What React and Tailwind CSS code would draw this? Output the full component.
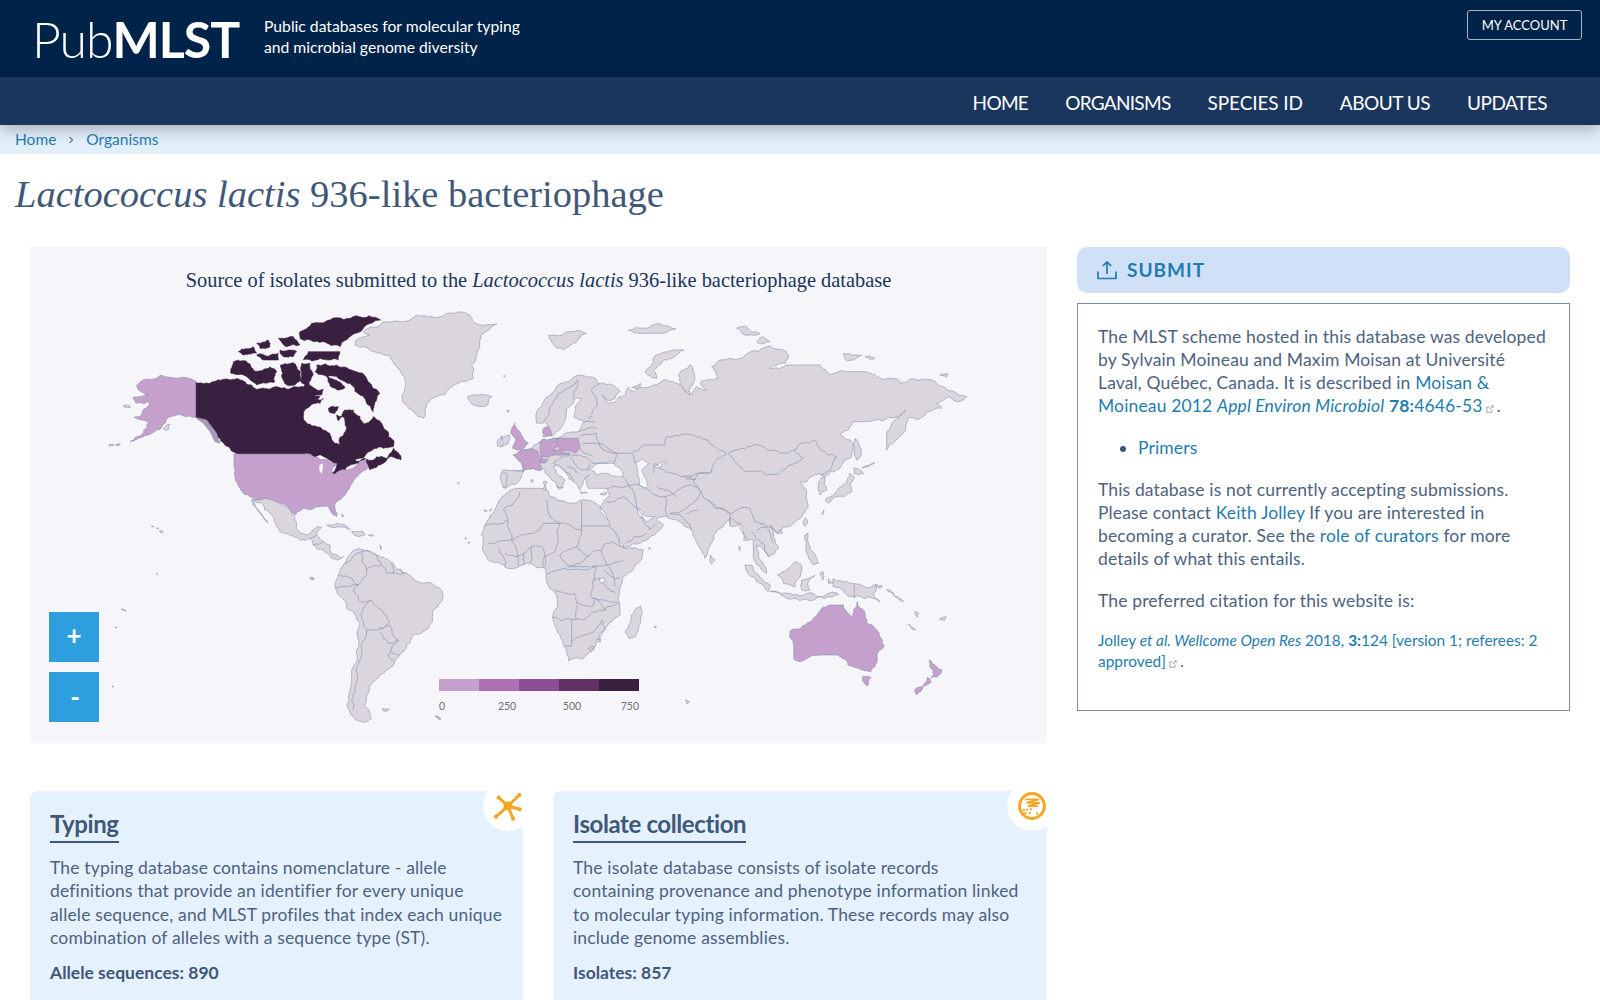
import React from "react";

const LIGHT = "#c6a0cc", DARK = "#3a2040", GREY = "#dbd5dd", LINE = "#7f8ea9", BG = "#f6f5f9";

const noise = (x, y) => {
  const s = Math.sin(x * 12.9898 + y * 78.233) * 43758.5453;
  return s - Math.floor(s) - 0.5;
};
/* Gives hand-traced outlines a natural, crinkled coastline; straight axis-aligned borders stay straight. */
function rough(str, closed) {
  let p = str.trim().split(/\s+/).map((s) => s.split(",").map(Number));
  for (let level = 0; level < 3; level++) {
    const out = [];
    const n = closed ? p.length : p.length - 1;
    for (let i = 0; i < n; i++) {
      const a = p[i], b = p[(i + 1) % p.length];
      out.push(a);
      const dx = b[0] - a[0], dy = b[1] - a[1];
      const len = Math.hypot(dx, dy);
      if (len < 7 || ((dx === 0 || dy === 0) && len > 30)) continue;
      const k = Math.max(-7, Math.min(7, noise(a[0] + b[0], a[1] + b[1]) * len * 0.32));
      out.push([(a[0] + b[0]) / 2 - (dy / len) * k, (a[1] + b[1]) / 2 + (dx / len) * k]);
    }
    if (!closed) out.push(p[p.length - 1]);
    p = out;
  }
  return p.map((q) => q[0].toFixed(1) + "," + q[1].toFixed(1)).join(" ");
}

function Land({ pts, fill = GREY, stroke = LINE }) {
  return <polygon points={rough(pts, true)} fill={fill} stroke={stroke} strokeWidth="0.55" vectorEffect="non-scaling-stroke" strokeLinejoin="round" />;
}
function Border({ pts }) {
  return <polyline points={rough(pts, false)} fill="none" stroke={LINE} strokeWidth="0.6" vectorEffect="non-scaling-stroke" strokeLinejoin="round" />;
}

const canadaParts = [
  "497,247 540,250 580,238 610,238 640,243 665,255 680,268 730,262 775,268 820,260 830,248 860,270 880,268 875,285 850,290 860,300 880,295 870,310 830,325 820,350 830,370 860,380 900,400 915,430 930,435 932,410 945,395 945,365 935,345 945,330 970,330 990,350 1000,370 1015,368 1030,350 1060,380 1075,410 1090,420 1090,440 1060,445 1010,460 975,480 1000,480 1040,470 1070,475 1090,445 1110,465 1112,480 1080,470 1060,490 1030,505 1020,510 1010,490 1005,475 985,490 945,510 915,522 905,520 920,490 890,478 870,478 850,468 820,462 620,462 600,445 575,425 555,395 530,360 497,352",
  "860,195 885,192 920,195 980,215 1020,250 1050,280 1040,300 1030,335 1010,310 1000,290 975,275 960,250 930,238 905,228 880,225 855,215",
  "810,95 845,70 900,60 980,47 1052,60 1000,85 960,110 930,140 880,125 840,120 810,115",
  "835,155 930,155 925,180 870,175 820,180",
  "610,185 640,182 670,210 720,200 740,215 735,245 680,255 650,230 602,220",
  "625,155 670,140 680,160 640,165",
  "680,130 715,120 720,140 690,145",
  "745,115 790,110 810,135 770,140",
  "680,165 745,160 745,180 700,180",
  "750,150 800,155 790,170 760,170",
  "752,195 790,188 812,215 808,245 770,255 755,225",
  "815,190 840,190 850,225 835,255 810,240",
  "895,325 925,320 915,340 900,338",
  "890,228 915,240 945,262 930,270 900,258",
  "845,285 870,290 862,300", "920,345 938,350 925,362",
];
const naSpecks = [
  "237,434 250,433 252,437 238,438", "258,433 270,431 270,435 258,436", "280,316 300,319 301,323 282,321",
  "400,385 420,373 416,388 404,391", "312,352 325,350 322,358", "365,677 372,680 366,681", "380,683 386,685 381,687", "390,690 400,695 396,700 390,697",
  "890,675 920,670 960,690 925,680", "965,695 1000,695 1005,705 975,706", "1015,705 1030,706 1024,709", "935,642 942,648 936,650",
  "1283,548 1288,550 1284,552", "1420,228 1426,227 1424,231",
  "1378,630 1386,627 1380,634", "1362,630 1372,632 1365,635", "1305,712 1309,716 1306,718", "1314,726 1320,728 1315,730", "1050,735 1056,745 1052,748", "845,832 852,834 850,840 842,837",
  "1430,332 1436,331 1434,337",
];

const eurasia = "107,345 125,320 160,275 180,250 215,237 275,230 295,250 345,260 360,275 345,295 320,300 305,285 320,308 340,308 375,285 385,262 400,275 420,262 465,255 490,240 520,245 548,255 555,275 575,285 590,260 610,270 620,270 600,250 640,240 655,235 635,200 675,180 735,165 775,155 800,140 850,150 865,165 855,190 810,205 860,195 900,195 960,195 990,225 1040,215 1090,215 1130,230 1190,235 1200,250 1260,240 1310,250 1370,280 1400,290 1375,305 1345,290 1310,310 1325,325 1270,350 1225,352 1220,370 1190,420 1160,450 1160,395 1180,365 1215,330 1150,362 1100,365 1060,365 1020,405 1050,420 1060,430 1055,470 1020,505 990,515 975,530 960,520 920,545 900,545 920,570 925,620 890,660 850,680 835,700 810,675 835,745 805,770 795,755 770,735 775,770 800,820 780,800 760,775 760,720 745,720 730,720 720,670 695,680 690,655 650,690 640,720 615,775 600,745 580,695 555,680 540,665 500,650 470,655 490,675 450,710 400,730 375,745 350,700 320,650 300,620 330,590 320,565 265,565 255,535 265,525 250,545 240,570 220,545 200,520 170,495 160,500 195,540 180,565 150,530 130,505 100,505 70,515 50,550 15,565 5,550 8,510 70,512 65,490 40,465 75,450 95,445 118,430 130,418 170,415 235,395 250,365 275,350 235,360 222,350 225,320 245,295 225,295 200,325 190,370 170,395 155,408 135,365 110,370";
const seas = [
  "270,505 300,490 335,485 345,495 370,530 340,528 290,525",
  "405,490 420,480 445,490 425,510 445,560 430,565 415,530",
  "410,620 430,645 465,650 445,665 420,650",
  "465,500 495,482 498,490 475,505",
  "560,535 575,530 575,538 562,540",
];
const euPurple = [
  "45,368 50,385 60,395 72,420 85,430 72,445 50,450 38,445 48,420 32,395",
  "40,465 75,450 95,445 125,470 130,485 120,490 125,510 100,505 70,515 65,490",
  "118,430 130,418 170,415 175,440 160,450 165,465 130,470 125,470 120,455",
  "130,385 145,380 155,408 130,410",
  "172,415 235,415 240,445 225,460 180,450 175,440",
  "160,450 180,448 210,460 185,465 165,463",
  "118,482 145,478 130,490",
];
const euGrey = [
  "5,410 28,405 25,430 5,440", "-6,420 5,408 6,440 -8,438",
  "145,105 200,95 260,100 230,125 190,150 155,125", "385,90 430,85 480,72 528,85 480,100 420,100",
  "710,85 740,80 780,100 750,105", "770,125 790,110 810,125 775,130",
  "1030,160 1085,165 1060,180 1035,178", "1095,170 1125,175 1110,178", "1320,225 1345,222 1340,232",
  "435,215 460,175 520,150 552,150 530,165 490,180 460,210 470,235 445,225",
  "535,225 570,195 585,240 570,285 555,270 540,255",
  "1065,415 1075,425 1080,470 1070,480 1062,450", "1060,505 1090,520 1075,525 1062,520", "975,600 1010,575 1040,550 1050,520 1062,530 1055,575 1010,590 985,610",
  "955,545 975,530 980,570 960,585", "915,655 922,660 915,680 910,670", "835,695 845,690 845,702",
  "915,705 925,700 925,730 955,790 940,795 920,760", "630,765 645,780 635,793 628,780",
  "832,825 890,785 905,795 885,860 850,850", "735,795 760,800 810,855 805,875 770,845", "810,875 880,885 960,890 880,895",
  "905,840 945,825 925,845 930,870 905,870", "1000,835 1055,850 1130,855 1120,880 1140,906 1090,895 1050,890 1000,860",
  "130,545 140,545 138,570 130,568", "92,540 100,540 96,548", "170,560 190,562 178,568", "240,575 262,578 245,582", "300,582 320,578 315,585",
  "395,262 422,250 415,265", "1085,505 1100,497 1125,487 1105,500", "960,820 970,815 968,840", "985,835 1000,850 985,850", "960,890 1010,878 1015,885 975,895",
  "715,740 722,742 718,752", "965,640 972,630 968,645", "445,745 452,743 450,748",
];
const euBorders = [
  "395,460 430,435 495,435 500,410 555,402 600,410 680,460",
  "685,460 710,450 760,435 840,460 885,450 910,475 850,510 800,525 745,515 710,490 685,462",
  "885,450 905,430 945,420 985,465 1010,470 990,510 960,525",
  "680,460 650,480 635,515 590,525 580,545 600,570 625,600 690,640 750,625 765,665 790,670",
  "395,460 405,490", "460,520 465,490 540,530 635,515",
  "385,555 425,560 495,590 500,615 505,650", "320,565 380,560 385,555", "375,535 385,555 410,620",
  "495,590 570,555 600,570 590,600 560,625 510,640 555,660 575,690", "625,600 650,625 690,640 690,680", "690,655 720,670",
  "240,410 290,400 300,440 350,460 395,460", "245,430 295,430 350,460 340,490 280,490 240,465",
  "275,345 290,320 275,270 300,250", "130,365 175,280 230,240", "220,295 235,240",
  "320,605 370,590 410,625 430,660 450,690", "375,730 440,700", "470,670 450,690",
  "720,670 745,720", "770,690 800,680 835,700", "755,695 795,735 805,770", "785,670 800,680 820,730",
  "8,520 20,520 18,560 8,562", "70,512 40,510", "240,465 215,465 185,470 160,490 190,510 220,545", "210,470 235,505 265,510 270,490", "200,500 235,520",
  "240,445 280,470", "545,530 590,540", "470,560 530,590", "595,630 560,640", "235,395 290,385", "250,365 285,368",
];
const africa = "25,575 50,565 135,565 150,590 205,610 245,600 300,620 320,655 350,705 375,745 430,750 410,790 370,830 360,880 359,915 359,945 300,1000 288,1035 250,1075 206,1083 194,1040 163,970 156,950 172,895 137,830 135,805 90,790 15,800 -35,780 -50,730 -48,680 -20,640 -5,610";
const africaBorders = [
  "245,605 245,678 330,678", "245,678 245,690 180,670 145,640 140,600", "60,575 55,590 10,630 25,660 35,720 100,700 130,670 180,670", "-48,680 25,660",
  "245,690 230,740 265,770 305,750 320,730 345,730 375,745", "180,670 170,740 135,770 130,800", "95,740 130,745 135,800", "305,750 320,795 370,780", "232,740 180,770 205,800 265,770",
  "35,720 -35,730", "35,720 50,770 95,740 90,790", "-5,745 15,800", "15,760 50,770", "70,760 72,795", "55,765 55,798",
  "205,800 270,800", "275,800 320,795 345,860",
];

function WorldMap() {
  return (
    <svg viewBox="30 247 1017 496" className="block w-full h-full" aria-label="World map">
      <g transform="translate(30,300) scale(0.33333)">
        {canadaParts.map((p, i) => <Land key={i} pts={p} fill={DARK} stroke={DARK} />)}
        <polygon points="840,478 870,465 895,478 870,483" fill={BG} />
        <Land fill={LIGHT} pts="497,242 440,235 390,226 350,238 318,256 328,272 358,285 325,290 308,295 318,310 355,305 358,315 340,328 335,345 315,352 330,360 355,370 350,385 320,410 300,425 340,410 380,390 405,370 420,350 440,345 470,350 497,352" />
        <polygon points="497,352 530,360 560,400 570,430 555,425 540,395 520,370" fill="#a99ab9" stroke={LINE} strokeWidth="0.5" vectorEffect="non-scaling-stroke" />
        <Land fill={LIGHT} pts="612,462 820,462 850,470 870,478 890,480 920,490 905,520 915,522 945,510 985,490 1008,475 1015,500 990,520 970,545 955,570 945,585 915,610 920,650 910,645 895,615 860,620 820,625 795,645 775,620 740,605 690,600 660,590 630,565 615,530 612,500" />
        <polygon points="868,495 880,490 876,522 868,512" fill={BG} />
        <Land pts="1000,95 1060,65 1140,60 1160,45 1250,40 1320,45 1330,65 1400,72 1365,95 1350,130 1340,165 1325,195 1330,235 1290,245 1260,265 1220,290 1190,310 1180,355 1165,350 1135,325 1115,290 1125,245 1100,200 1080,165 1030,155 975,135 980,120 1020,105" />
        <Land pts="1312,292 1340,285 1385,290 1375,310 1345,320 1320,305" />
        <Land pts="665,600 690,600 740,605 775,625 795,650 800,690 830,705 865,680 875,682 860,705 880,725 900,735 905,760 930,775 940,770 925,780 905,775 880,750 850,735 840,715 810,720 780,705 745,685 720,640 695,610" />
        <Land pts="665,600 690,640 715,668 700,650 680,625" />
        <Border pts="840,715 860,705" /><Border pts="850,735 880,725" />
        {naSpecks.map((p, i) => <Land key={i} pts={p} />)}
      </g>
      <g transform="translate(30,560) scale(0.33333)">
        <Land pts="945,10 985,-35 1040,-15 1090,10 1130,40 1180,70 1235,90 1240,105 1225,135 1210,150 1195,205 1150,225 1125,270 1105,290 1085,320 1050,345 1025,370 1015,400 1005,440 1025,475 1000,487 960,460 955,410 965,370 965,330 985,260 990,190 950,145 925,105 915,80 925,45" />
        <Border pts="1025,120 1055,150 1080,185 1045,210 1010,210 995,175 1000,145 1025,120" />
        <Border pts="1045,205 1080,195 1105,240 1075,250 1050,215" />
        <Border pts="1080,270 1110,285" /><Border pts="1105,240 1075,290 1095,305" />
        <Border pts="1010,210 990,300 975,390 970,450" />
        <Border pts="925,45 955,50 985,75 950,80 915,85" />
        <Border pts="945,10 995,-25 1010,30 1010,45 985,75 970,95 990,125 1025,120" />
        <Border pts="995,-25 1040,-15 1055,15 1010,30" />
        <Border pts="1055,15 1070,40 1100,40 1130,40" /><Border pts="1085,10 1090,40" /><Border pts="1110,25 1115,40" />
        <Land pts="1058,445 1078,446 1072,453 1058,452" />
        <Land pts="1216,468 1230,474 1230,478" />
        <Land pts="840,52 850,54 848,60 842,58" />
        <Land pts="273,147 285,150 288,154 276,150" /><Land pts="255,201 261,202 256,204" /><Land pts="246,378 251,379 247,382" /><Land pts="380,39 384,41 381,43" />
      </g>
      <g transform="translate(500,300) scale(0.33333)">
        <Land pts={africa} />
        {africaBorders.map((p, i) => <Border key={i} pts={p} />)}
        <Land pts="422,918 427,940 406,1010 387,1015 375,995 394,945" />
        <Land pts={eurasia} />
        {seas.map((p, i) => <Land key={i} pts={p} fill={BG} />)}
        {euBorders.map((p, i) => <Border key={i} pts={p} />)}
        {euGrey.map((p, i) => <Land key={i} pts={p} />)}
        {euPurple.map((p, i) => <Land key={i} pts={p} fill={LIGHT} />)}
      </g>
      <g transform="translate(400,560) scale(0.41667,0.33333)">
        <Border pts="352,40 385,30 395,25 470,20" />
        <Border pts="470,20 465,60 462,115 490,150" />
        <Border pts="365,172 415,178 425,180" />
        <Border pts="372,90 400,100 420,102 425,130 462,140 465,120" />
        <Border pts="425,135 422,175 445,178 465,155 495,150" />
        <Border pts="412,180 412,258 395,258" />
        <Border pts="412,245 440,225 470,208 485,180" />
        <Border pts="490,150 525,128" />
        <Border pts="485,180 495,205 478,245" />
        <Border pts="465,60 480,55 520,100" />
        <Border pts="462,115 490,120 520,125" />
        <Border pts="490,30 528,55" />
        <Border pts="452,265 462,258 465,265 456,272 452,265" />
        <Border pts="472,238 482,236 482,246 474,246 472,238" />
        <polygon points="478,58 490,52 492,64 482,70" fill={BG} stroke={LINE} strokeWidth="0.5" vectorEffect="non-scaling-stroke" />
        <polyline points="1090,75 1090,115" fill="none" stroke={LINE} strokeWidth="0.6" vectorEffect="non-scaling-stroke" />
        <Land fill={LIGHT} pts="935,215 985,185 1005,155 1030,135 1065,135 1085,175 1098,125 1120,190 1150,225 1162,255 1145,305 1130,335 1110,330 1075,315 1050,285 1010,285 960,305 945,295 945,260" />
        <Land fill={LIGHT} pts="1110,350 1130,352 1122,378 1115,370" />
        <Land fill={LIGHT} pts="1270,300 1300,330 1290,350 1275,355 1280,330" />
        <Land fill={LIGHT} pts="1265,352 1275,365 1240,405 1235,392" />
        <Land pts="1140,72 1158,78 1150,85" /><Land pts="1168,88 1208,125 1195,115" />
        <Land pts="1220,192 1238,210 1228,206" /><Land pts="1235,155 1245,160 1242,172" /><Land pts="1295,178 1310,168 1308,180" />
        <Land pts="685,420 695,425 688,432" /><Land pts="610,198 616,200 612,204" /><Land pts="85,468 97,475 97,480" />
      </g>
    </svg>
  );
}

function Ext() {
  return (
    <svg viewBox="0 0 10 10" className="inline-block w-[8px] h-[8px] mx-[3px] align-[-1px]" fill="none" stroke="#8a8f96" strokeWidth="1">
      <path d="M7.5 5.5V9H1V2.5H4.5" />
      <path d="M5 5L9 1M6.5 1H9V3.5" />
    </svg>
  );
}

function Card({ title, children, stat, icon, width }) {
  return (
    <div className={`relative h-[260px] bg-[#e6f1fe] rounded-tl-[8px] px-[20px] pt-[18px] ${width}`}>
      <div className="absolute top-[-10px] right-[-10px] w-[50px] h-[50px] rounded-full bg-white flex items-center justify-center">{icon}</div>
      <h2 className="inline-block text-[24px] leading-[30px] font-bold text-[#3f5878] border-b-[2px] border-[#3f5878] pb-[2px] tracking-[-0.4px]">{title}</h2>
      <p className="mt-[13px] text-[17.5px] leading-[23.3px] tracking-[0.16px] whitespace-nowrap text-[#4d627f]">{children}</p>
      <p className="mt-[12px] text-[17.5px] leading-[23px] font-bold text-[#3f5878]">{stat}</p>
    </div>
  );
}

export default function App() {
  const link = "text-[#1f7cae]";
  return (
    <div className="w-[1600px] h-[1000px] overflow-hidden bg-white font-['Lato',sans-serif] text-[#3f5878]">
      <header className="h-[77px] bg-[#002349] flex items-start text-white">
        <div className="ml-[32px] mt-[9px] w-[206px] shrink-0 whitespace-nowrap text-[50px] leading-[60px] tracking-[-1px]">
          <span className="font-light">Pub</span><span className="font-bold">MLST</span>
        </div>
        <div className="ml-[26px] mt-[16px] text-[15.7px] leading-[21px]">
          Public databases for molecular typing<br />and microbial genome diversity
        </div>
        <button className="ml-auto mr-[18px] mt-[10px] w-[115px] h-[30px] border border-[#a9b4c2] rounded-[3px] text-[13px] leading-none">MY ACCOUNT</button>
      </header>
      <nav className="relative z-10 h-[48px] bg-[#1a365d] shadow-[0_4px_14px_rgba(0,0,0,0.28)] flex items-center justify-end gap-[37px] pr-[53px] pt-[5px] text-white text-[19px] tracking-[-0.7px]">
        <span>HOME</span><span>ORGANISMS</span><span className="tracking-[-0.1px]">SPECIES ID</span><span className="tracking-[-0.5px]">ABOUT US</span><span className="tracking-[-0.5px]">UPDATES</span>
      </nav>
      <div className="h-[29px] bg-[#e3eefb] flex items-center pl-[15px] text-[15.5px] text-[#1f7cae]">
        <span>Home</span>
        <svg viewBox="0 0 8 10" className="w-[6px] h-[8px] mx-[12px]" fill="none" stroke="#3f5878" strokeWidth="1.4"><path d="M2 1L6 5L2 9" /></svg>
        <span>Organisms</span>
      </div>
      <h1 className="ml-[15px] mt-[16px] h-[77px] font-['Liberation_Serif',serif] text-[38.5px] leading-[48px] text-[#3f5878] font-normal">
        <em>Lactococcus lactis</em> 936-like bacteriophage
      </h1>
      <div className="flex items-start pl-[30px]">
        <div className="w-[1017px] flex flex-col">
          <div className="relative h-[496px] bg-[#f6f5f9]">
            <WorldMap />
            <div className="absolute left-0 right-0 top-[21px] text-center font-['Liberation_Serif',serif] text-[20.4px] leading-[24px] text-[#1a365d]">
              Source of isolates submitted to the <em>Lactococcus lactis</em> 936-like bacteriophage database
            </div>
            <div className="absolute left-[19px] top-[365px] flex flex-col gap-[10px]">
              <button className="w-[50px] h-[50px] pb-[4px] bg-[#2d9fdf] text-white text-[26px] font-bold leading-none">+</button>
              <button className="w-[50px] h-[50px] pl-[2px] bg-[#2d9fdf] text-white text-[26px] font-bold leading-none">-</button>
            </div>
            <div className="absolute left-[409px] top-[432px] w-[200px]">
              <div className="flex h-[12px]">
                <div className="flex-1 bg-[#c6a0cc]" /><div className="flex-1 bg-[#ad70b3]" /><div className="flex-1 bg-[#8c4e95]" /><div className="flex-1 bg-[#5f3263]" /><div className="flex-1 bg-[#3a2040]" />
              </div>
              <div className="flex mt-[8px] text-[10.5px] leading-[14px] text-[#6f6f75]">
                <span className="w-[59px]">0</span><span className="w-[65px]">250</span><span className="w-[58px]">500</span><span>750</span>
              </div>
            </div>
          </div>
          <div className="flex gap-[30px] mt-[48px]">
            <Card width="w-[493px]" title="Typing" stat="Allele sequences: 890" icon={
              <svg viewBox="0 0 32 30" className="w-[32px] h-[30px]" fill="none" stroke="#f5a623" strokeWidth="3" strokeLinecap="round">
                <path d="M16 15L6.7 6.7M16 15L27.3 4M16 15L27.7 18.3M16 15L21 27.7M16 15L4 25.7" />
                <circle cx="16" cy="15" r="4.6" fill="#f5a623" stroke="none" />
                <g fill="#f5a623" stroke="none">
                  <circle cx="6.7" cy="6.7" r="2.1" /><circle cx="27.3" cy="4" r="2.1" /><circle cx="27.7" cy="18.3" r="2.1" /><circle cx="21" cy="27.7" r="2.1" /><circle cx="4" cy="25.7" r="2.1" />
                </g>
              </svg>
            }>
              The typing database contains nomenclature - allele<br />definitions that provide an identifier for every unique<br />allele sequence, and MLST profiles that index each unique<br />combination of alleles with a sequence type (ST).
            </Card>
            <Card width="w-[494px]" title="Isolate collection" stat="Isolates: 857" icon={
              <svg viewBox="0 0 30 30" className="w-[30px] h-[30px]" fill="none" stroke="#f5a623">
                <circle cx="15" cy="15" r="12.4" strokeWidth="3" />
                <path d="M8 8.3H22L9.5 11.8H23L11 15.2H21" strokeWidth="1.8" />
                <g fill="#f5a623" stroke="none">
                  <rect x="6" y="17.7" width="2" height="2" /><rect x="9" y="17.7" width="2" height="2" /><rect x="13" y="17.2" width="2" height="2" /><rect x="7.3" y="21" width="2" height="2" /><rect x="11.7" y="21" width="2" height="2" /><rect x="19" y="21.7" width="2" height="2" />
                </g>
              </svg>
            }>
              The isolate database consists of isolate records<br />containing provenance and phenotype information linked<br />to molecular typing information. These records may also<br />include genome assemblies.
            </Card>
          </div>
        </div>
        <aside className="ml-[30px] w-[493px]">
          <div className="h-[46px] rounded-[10px] bg-[#d0e1f7] flex items-center pl-[20px] gap-[10px]">
            <svg viewBox="0 0 20 20" className="w-[20px] h-[20px]" fill="none" stroke="#1f7cae" strokeWidth="1.7">
              <path d="M10 14V2M5.8 6L10 2L14.2 6M1 11.5V18.5H19V11.5" />
            </svg>
            <span className="text-[19px] font-bold tracking-[1px] text-[#1f7cae]">SUBMIT</span>
          </div>
          <div className="mt-[10px] h-[408px] border border-[#7a8ba3] px-[20px] pt-[21px] text-[17.5px] leading-[23px] tracking-[0.14px] whitespace-nowrap text-[#4d627f]">
            <p>
              The MLST scheme hosted in this database was developed<br />by Sylvain Moineau and Maxim Moisan at Université<br />Laval, Québec, Canada. It is described in{" "}
              <a className={link}>Moisan &amp;<br />Moineau 2012 <em>Appl Environ Microbiol</em> <b>78:</b>4646-53</a><Ext />.
            </p>
            <ul className="mt-[19px] ml-[40px] list-disc"><li className="text-[#3f5878]"><a className={link}>Primers</a></li></ul>
            <p className="mt-[19px]">
              This database is not currently accepting submissions.<br />Please contact <a className={link}>Keith Jolley</a> If you are interested in<br />becoming a curator. See the <a className={link}>role of curators</a> for more<br />details of what this entails.
            </p>
            <p className="mt-[19px]">The preferred citation for this website is:</p>
            <p className="mt-[18px] text-[15.4px] leading-[21px] tracking-normal">
              <a className={link}>Jolley <em>et al. Wellcome Open Res</em> 2018, <b>3:</b>124 [version 1; referees: 2<br />approved]</a><Ext />.
            </p>
          </div>
        </aside>
      </div>
    </div>
  );
}
